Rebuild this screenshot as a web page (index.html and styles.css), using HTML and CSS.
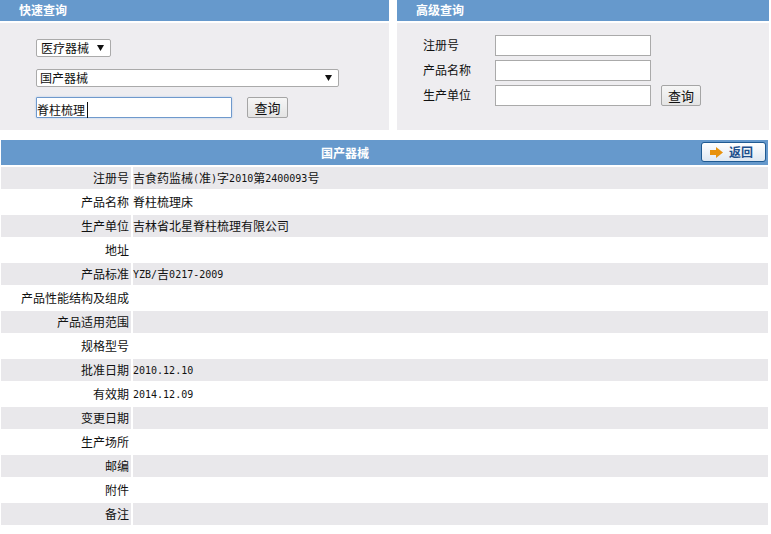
FILE: index.html
```html
<!DOCTYPE html>
<html lang="zh">
<head>
<meta charset="utf-8">
<title>国产器械</title>
<link rel="stylesheet" href="styles.css">
</head>
<body>
<div class="top">
  <section class="panel panel-left">
    <h2 class="panel-title">快速查询</h2>
    <div class="panel-body quick">
      <div class="select-wrap short">
        <select class="select"><option>医疗器械</option></select>
        <svg class="arrow" width="7" height="6" viewBox="0 0 7 6"><path d="M0 0h7L3.5 6z"/></svg>
      </div>
      <div class="select-wrap long">
        <select class="select tight"><option>国产器械</option></select>
        <svg class="arrow" width="7" height="6" viewBox="0 0 7 6"><path d="M0 0h7L3.5 6z"/></svg>
      </div>
      <div class="search-row">
        <div class="focus-input"><span class="caret">脊柱梳理</span></div>
        <button class="btn" type="button">查询</button>
      </div>
    </div>
  </section>
  <section class="panel panel-right">
    <h2 class="panel-title">高级查询</h2>
    <div class="panel-body advanced">
      <label class="adv-label">注册号</label><input class="adv-input" type="text"><span></span>
      <label class="adv-label">产品名称</label><input class="adv-input" type="text"><span></span>
      <label class="adv-label">生产单位</label><input class="adv-input" type="text"><button class="btn" type="button">查询</button>
    </div>
  </section>
</div>
<main class="detail">
  <div class="detail-head">
    <span class="detail-title">国产器械</span>
    <a class="back" href="#">
      <svg width="13" height="11" viewBox="0 0 13 11"><path fill="#e8920c" d="M0 3h6V0l7 5.500-7 5.500V8H0z"/></svg>
      <span>返回</span>
    </a>
  </div>
  <div class="row"><div class="k">注册号</div><div class="v">吉食药监械<span class="n">(</span>准<span class="n">)</span>字<span class="n">2010</span>第<span class="n">2400093</span>号</div></div>
  <div class="row"><div class="k">产品名称</div><div class="v">脊柱梳理床</div></div>
  <div class="row"><div class="k">生产单位</div><div class="v">吉林省北星脊柱梳理有限公司</div></div>
  <div class="row"><div class="k">地址</div><div class="v"></div></div>
  <div class="row"><div class="k">产品标准</div><div class="v"><span class="n">YZB/</span>吉<span class="n">0217-2009</span></div></div>
  <div class="row"><div class="k">产品性能结构及组成</div><div class="v"></div></div>
  <div class="row"><div class="k">产品适用范围</div><div class="v"></div></div>
  <div class="row"><div class="k">规格型号</div><div class="v"></div></div>
  <div class="row"><div class="k">批准日期</div><div class="v"><span class="n">2010.12.10</span></div></div>
  <div class="row"><div class="k">有效期</div><div class="v"><span class="n">2014.12.09</span></div></div>
  <div class="row"><div class="k">变更日期</div><div class="v"></div></div>
  <div class="row"><div class="k">生产场所</div><div class="v"></div></div>
  <div class="row"><div class="k">邮编</div><div class="v"></div></div>
  <div class="row"><div class="k">附件</div><div class="v"></div></div>
  <div class="row"><div class="k">备注</div><div class="v"></div></div>
</main>
</body>
</html>
```
FILE: styles.css
```css
* { box-sizing: border-box; }
html, body { margin: 0; padding: 0; background: #fff; }
body {
  font-family: "Noto Sans CJK SC", "Liberation Sans", sans-serif;
  font-size: 12px;
  line-height: 16px;
  color: #111;
  height: 534px;
  overflow: hidden;
}
.top { display: flex; gap: 8px; height: 130px; }
.panel { display: flex; flex-direction: column; }
.panel-left { width: 389px; }
.panel-right { width: 372px; }
.panel-title {
  margin: 0;
  height: 21px;
  background: #6699cc;
  color: #fff;
  font-size: 12px;
  font-weight: 700;
  line-height: 20px;
  padding-left: 19px;
  flex: none;
}
.panel-body { flex: 1; margin-top: 2px; background: #eeedf0; }

.quick { padding: 16px 0 0 36px; }
.select-wrap { position: relative; height: 18px; }
.short { width: 75px; }
.long { width: 303px; margin-top: 12px; }
.select {
  appearance: none;
  width: 100%;
  height: 18px;
  border: 1px solid #aaa;
  border-radius: 2px;
  background: #fff;
  color: #111;
  font: 12px/16px "Noto Sans CJK SC", sans-serif;
  padding: 0 0 0 4px;
}
.select.tight { padding-left: 3px; }
.arrow { position: absolute; right: 7px; top: 6px; fill: #111; }
.search-row { display: flex; align-items: flex-start; gap: 15px; margin-top: 10px; }
.focus-input {
  width: 196px;
  height: 21px;
  border: 1px solid #6f99cc;
  border-radius: 1px;
  box-shadow: 0 0 2px #a8c8ec;
  background: #fff;
  line-height: 19px;
  padding-left: 0;
  font-size: 12px;
}
.caret { display: inline-block; height: 16px; line-height: 16px; border-right: 1px solid #111; padding-right: 2px; vertical-align: middle; }
.btn {
  width: 41px;
  height: 21px;
  padding: 0;
  border: 1px solid #a5a5a5;
  border-radius: 2px;
  background: linear-gradient(#f6f6f6, #e4e4e4);
  color: #111;
  font: 13px/19px "Noto Sans CJK SC", sans-serif;
}

.advanced {
  display: grid;
  grid-template-columns: 72px 156px auto;
  grid-auto-rows: 21px;
  row-gap: 4px;
  column-gap: 0;
  padding: 12px 0 0 26px;
  align-items: center;
  justify-items: start;
}
.adv-label { font-size: 12px; margin-bottom: 2px; }
.adv-input { width: 156px; height: 21px; border: 1px solid #aaa; background: #fff; padding: 0; }
.advanced .btn { margin-left: 10px; width: 40px; }

.detail { margin: 10px 3px 0 1px; }
.detail-head {
  position: relative;
  height: 25px;
  background: #6699cc;
  display: flex;
  align-items: center;
  justify-content: center;
  padding-right: 79px;
  margin-bottom: 2px;
}
.detail-title { color: #fff; font-weight: 700; font-size: 12px; }
.back {
  position: absolute;
  right: 2px;
  top: 2px;
  width: 65px;
  height: 20px;
  border: 1px solid #1f5a92;
  border-radius: 3px;
  background: linear-gradient(#ffffff, #dfe8f2);
  color: #1d4f8c;
  font-weight: 700;
  font-size: 12px;
  line-height: 18px;
  text-decoration: none;
  display: flex;
  align-items: center;
  gap: 6px;
  padding-left: 8px;
}
.row { display: flex; height: 22px; margin-bottom: 2px; line-height: 22px; background: #fff; }
.row:nth-child(even) { background: #e9e8eb; }
.k { width: 132px; text-align: right; padding-right: 2px; border-right: 2px solid #fff; flex: none; }
.v { flex: 1; padding-left: 0; }
.n { font-family: "DejaVu Sans Mono", monospace; font-size: 10px; position: relative; top: -1px; }
```
